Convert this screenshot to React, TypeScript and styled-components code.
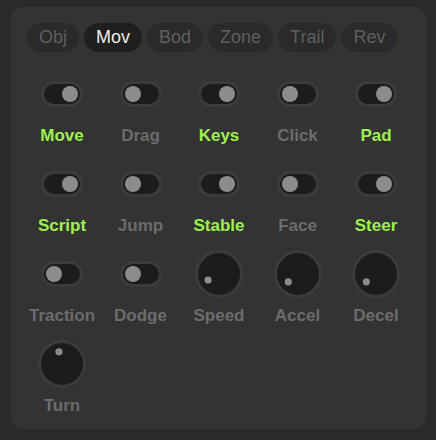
import React from "react";
import styled, { createGlobalStyle } from "styled-components";

const GlobalStyle = createGlobalStyle`
  body {
    margin: 0;
    background: #2a2a2a;
    font-family: "Liberation Sans", Arial, sans-serif;
  }
`;

const Page = styled.div`
  padding: 7px 10px 12px 11px;
`;

const Panel = styled.div`
  background: #333333;
  border-radius: 13px;
  padding: 16px 15px 13px 16px;
  display: flex;
  flex-direction: column;
  gap: 18px;
`;

const Tabs = styled.div`
  display: flex;
  gap: 5px;
`;

const Tab = styled.button<{ $active?: boolean }>`
  height: 29px;
  padding: 0 12px;
  border: none;
  border-radius: 15px;
  background: ${p => (p.$active ? "#1f1f1f" : "#2a2a2a")};
  color: ${p => (p.$active ? "#ececec" : "#5f5f5f")};
  font-family: inherit;
  font-size: 18px;
  line-height: 29px;
  cursor: pointer;
`;

const Grid = styled.div`
  display: grid;
  grid-template-columns: repeat(5, 70px);
  column-gap: 8.5px;
  row-gap: 14px;
`;

const Cell = styled.div`
  display: flex;
  flex-direction: column;
  align-items: center;
  gap: 8px;
`;

const ControlBox = styled.div`
  height: 48px;
  display: flex;
  align-items: center;
  justify-content: center;
`;

const Label = styled.span<{ $on?: boolean }>`
  font-size: 17px;
  line-height: 20px;
  font-weight: bold;
  color: ${p => (p.$on ? "#9ef04e" : "#6c6c6c")};
`;

const Track = styled.div<{ $on?: boolean }>`
  box-sizing: border-box;
  width: 42px;
  height: 26px;
  border: 3px solid #3b3b3b;
  border-radius: 13px;
  background: #1c1c1c;
  display: flex;
  align-items: center;
  justify-content: ${p => (p.$on ? "flex-end" : "flex-start")};
  padding: 0 2px;
`;

const Thumb = styled.div`
  width: 16px;
  height: 16px;
  border-radius: 50%;
  background: #8c8c8c;
`;

const Dial = ({ angle }: { angle: number }) => {
  const r = (angle * Math.PI) / 180;
  const x = 24 + 12.5 * Math.sin(r);
  const y = 24 - 12.5 * Math.cos(r);
  return (
    <svg width="48" height="48" viewBox="0 0 48 48">
      <circle cx="24" cy="24" r="22.5" fill="#1c1c1c" stroke="#3b3b3b" strokeWidth="3" />
      <circle cx={x} cy={y} r="3.6" fill="#8c8c8c" />
    </svg>
  );
};

type Item =
  | { kind: "toggle"; label: string; on: boolean }
  | { kind: "knob"; label: string; angle: number };

const items: Item[] = [
  { kind: "toggle", label: "Move", on: true },
  { kind: "toggle", label: "Drag", on: false },
  { kind: "toggle", label: "Keys", on: true },
  { kind: "toggle", label: "Click", on: false },
  { kind: "toggle", label: "Pad", on: true },
  { kind: "toggle", label: "Script", on: true },
  { kind: "toggle", label: "Jump", on: false },
  { kind: "toggle", label: "Stable", on: true },
  { kind: "toggle", label: "Face", on: false },
  { kind: "toggle", label: "Steer", on: true },
  { kind: "toggle", label: "Traction", on: false },
  { kind: "toggle", label: "Dodge", on: false },
  { kind: "knob", label: "Speed", angle: -119 },
  { kind: "knob", label: "Accel", angle: -129 },
  { kind: "knob", label: "Decel", angle: -129 },
  { kind: "knob", label: "Turn", angle: -14 },
];

const tabs = ["Obj", "Mov", "Bod", "Zone", "Trail", "Rev"];

export default function App() {
  return (
    <Page>
      <GlobalStyle />
      <Panel>
        <Tabs>
          {tabs.map(t => (
            <Tab key={t} $active={t === "Mov"}>
              {t}
            </Tab>
          ))}
        </Tabs>
        <Grid>
          {items.map(it => (
            <Cell key={it.label}>
              <ControlBox>
                {it.kind === "toggle" ? (
                  <Track $on={it.on}>
                    <Thumb />
                  </Track>
                ) : (
                  <Dial angle={it.angle} />
                )}
              </ControlBox>
              <Label $on={it.kind === "toggle" && it.on}>{it.label}</Label>
            </Cell>
          ))}
        </Grid>
      </Panel>
    </Page>
  );
}
